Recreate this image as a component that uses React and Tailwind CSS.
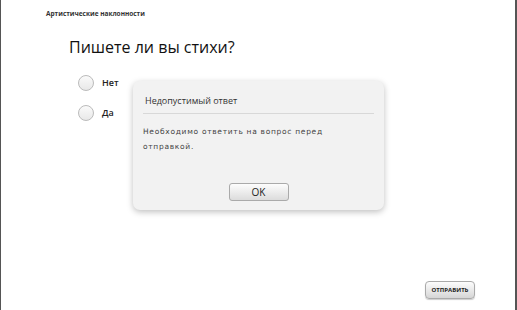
export default function App() {
  return (
    <div className="relative h-[310px] w-[517px] overflow-hidden border-l border-r-2 border-[#555] bg-white font-['Open_Sans',sans-serif] text-black">
      <div className="pl-[45px] pt-[9px] text-[6.5px] font-bold text-[#333]">Артистические наклонности</div>
      <h1 className="ml-[68px] mt-[17px] text-[16px] leading-[22px] text-[#111]">Пишете ли вы стихи?</h1>

      <div className="ml-[77px] mt-[17px] flex flex-col gap-[14px]">
        <label className="flex items-center gap-[8px]">
          <span className="h-[16px] w-[16px] rounded-full border border-[#bbb] bg-gradient-to-b from-[#fafafa] to-[#e8e8e8]" />
          <span className="text-[9px] font-semibold text-[#222]">Нет</span>
        </label>
        <label className="flex items-center gap-[8px]">
          <span className="h-[16px] w-[16px] rounded-full border border-[#bbb] bg-gradient-to-b from-[#fafafa] to-[#e8e8e8]" />
          <span className="text-[9px] font-semibold text-[#222]">Да</span>
        </label>
      </div>

      <div className="absolute left-[132px] top-[81px] flex h-[129px] w-[251px] flex-col rounded-[7px] bg-[#f2f2f2] px-[10px] shadow-[0_2px_6px_rgba(0,0,0,0.25)]">
        <div className="pl-[2px] pt-[14px] text-[9px] leading-[11px] text-[#333]">Недопустимый ответ</div>
        <div className="mt-[7px] h-px bg-[#d8d8d8]" />
        <p className="mt-[10px] w-[220px] font-['DejaVu_Sans',sans-serif] text-[7.5px] leading-[15px] tracking-[0.7px] text-[#444]">
          Необходимо ответить на вопрос перед отправкой.
        </p>
        <div className="mt-auto mb-[9px] flex justify-center">
          <button className="h-[18px] w-[60px] rounded-[3px] border border-[#aaa] bg-gradient-to-b from-[#fdfdfd] to-[#dcdcdc] text-[10px] leading-none text-[#222]">
            OK
          </button>
        </div>
      </div>

      <button className="absolute left-[424px] top-[281px] h-[18px] w-[50px] rounded-[4px] border border-[#aaa] bg-gradient-to-b from-[#fdfdfd] to-[#d6d6d6] text-[6px] font-bold leading-none text-[#222] shadow-[0_1px_1px_rgba(0,0,0,0.2)]">
        ОТПРАВИТЬ
      </button>
    </div>
  );
}
